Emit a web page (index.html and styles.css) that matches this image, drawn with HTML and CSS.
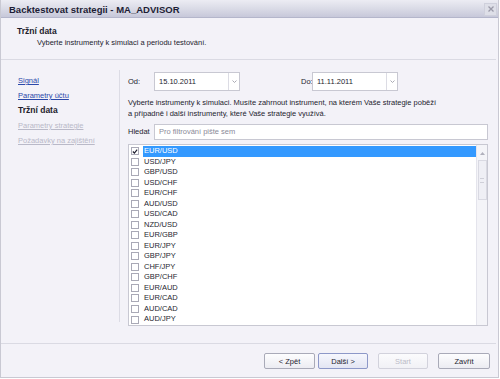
FILE: index.html
```html
<!DOCTYPE html>
<html lang="cs">
<head>
<meta charset="utf-8">
<title>Backtestovat strategii</title>
<link rel="stylesheet" href="styles.css">
</head>
<body>
<div class="window">
  <div class="titlebar">
    <span class="title">Backtestovat strategii - MA_ADVISOR</span>
    <span class="close"><svg width="6" height="6" viewBox="0 0 6 6"><path d="M0.5 0.5L5.5 5.5M5.5 0.5L0.5 5.5" stroke="#9a9aa8" stroke-width="1.3"/></svg></span>
  </div>
  <div class="header">
    <div class="h-title">Tržní data</div>
    <div class="h-sub">Vyberte instrumenty k simulaci a periodu testování.</div>
  </div>
  <div class="main">
    <nav class="nav">
      <a class="nav-link">Signál</a>
      <a class="nav-link">Parametry účtu</a>
      <span class="nav-current">Tržní data</span>
      <a class="nav-link disabled">Parametry strategie</a>
      <a class="nav-link disabled">Požadavky na zajištění</a>
    </nav>
    <div class="content">
      <div class="dates">
        <span class="lbl lbl-od">Od:</span>
        <div class="combo combo-od"><span class="combo-val">15.10.2011</span><span class="combo-btn"><svg width="5" height="3" viewBox="0 0 5 3"><path d="M0.5 0.5L2.5 2.5L4.5 0.5" fill="none" stroke="#a0a0ac" stroke-width="0.9"/></svg></span></div>
        <span class="lbl lbl-do">Do:</span>
        <div class="combo combo-do"><span class="combo-val">11.11.2011</span><span class="combo-btn"><svg width="5" height="3" viewBox="0 0 5 3"><path d="M0.5 0.5L2.5 2.5L4.5 0.5" fill="none" stroke="#a0a0ac" stroke-width="0.9"/></svg></span></div>
      </div>
      <p class="info">Vyberte instrumenty k simulaci. Musíte zahrnout instrument, na kterém Vaše strategie poběží<br>a případně i další instrumenty, které Vaše strategie využívá.</p>
      <div class="search">
        <span class="lbl lbl-search">Hledat</span>
        <div class="search-box">Pro filtrování pište sem</div>
      </div>
      <div class="list">
        <div class="rows">
          <div class="row sel"><span class="cb"><svg width="7" height="7" viewBox="0 0 7 7"><path d="M1 3.5L2.8 5.3L6 1.2" fill="none" stroke="#202030" stroke-width="1.4"/></svg></span><span class="txt">EUR/USD</span></div>
          <div class="row"><span class="cb"></span><span class="txt">USD/JPY</span></div>
          <div class="row"><span class="cb"></span><span class="txt">GBP/USD</span></div>
          <div class="row"><span class="cb"></span><span class="txt">USD/CHF</span></div>
          <div class="row"><span class="cb"></span><span class="txt">EUR/CHF</span></div>
          <div class="row"><span class="cb"></span><span class="txt">AUD/USD</span></div>
          <div class="row"><span class="cb"></span><span class="txt">USD/CAD</span></div>
          <div class="row"><span class="cb"></span><span class="txt">NZD/USD</span></div>
          <div class="row"><span class="cb"></span><span class="txt">EUR/GBP</span></div>
          <div class="row"><span class="cb"></span><span class="txt">EUR/JPY</span></div>
          <div class="row"><span class="cb"></span><span class="txt">GBP/JPY</span></div>
          <div class="row"><span class="cb"></span><span class="txt">CHF/JPY</span></div>
          <div class="row"><span class="cb"></span><span class="txt">GBP/CHF</span></div>
          <div class="row"><span class="cb"></span><span class="txt">EUR/AUD</span></div>
          <div class="row"><span class="cb"></span><span class="txt">EUR/CAD</span></div>
          <div class="row"><span class="cb"></span><span class="txt">AUD/CAD</span></div>
          <div class="row"><span class="cb"></span><span class="txt">AUD/JPY</span></div>
        </div>
        <div class="scrollbar">
          <span class="sb-arrow"><svg width="5" height="3" viewBox="0 0 5 3"><path d="M0 3L2.5 0L5 3Z" fill="#b0b0bc"/></svg></span>
          <span class="sb-thumb"><span class="grip"></span></span>
        </div>
      </div>
    </div>
  </div>
  <div class="footer">
    <button class="btn btn-back">&lt; Zpět</button>
    <button class="btn btn-next">Další &gt;</button>
    <button class="btn btn-start" disabled>Start</button>
    <button class="btn btn-close">Zavřít</button>
  </div>
</div>
</body>
</html>
```
FILE: styles.css
```css
html, body {
  margin: 0;
  padding: 0;
  background: #ffffff;
}
body {
  width: 500px;
  height: 379px;
  font-family: "Liberation Sans", Arial, sans-serif;
  font-size: 7.5px;
  color: #23232f;
}
.window {
  box-sizing: border-box;
  width: 499px;
  height: 378px;
  margin-left: 0;
  border: 1px solid #c9c9d3;
  border-top: none;
  background: #f3f2f8;
  display: flex;
  flex-direction: column;
}
.titlebar {
  height: 18px;
  box-sizing: border-box;
  display: flex;
  align-items: center;
  justify-content: space-between;
  padding: 0 1px 0 8px;
  background: linear-gradient(#ececf3 0%, #dcdde8 45%, #c7c8da 100%);
  border-bottom: 1px solid #b4b6cb;
}
.title {
  font-weight: bold;
  font-size: 9.5px;
  color: #1d1d35;
  padding-top: 2px;
}
.close {
  width: 11px;
  height: 11px;
  display: flex;
  align-items: center;
  justify-content: center;
  background: #dedfe8;
  border: 1px solid #cfd0dc;
  margin-top: 1px;
}
.header {
  height: 42px;
  box-sizing: border-box;
  border-bottom: 1px solid #dadae3;
  padding: 7px 0 0 16px;
  margin-right: 2px;
}
.h-title {
  font-weight: bold;
  font-size: 8.5px;
  line-height: 12px;
  color: #1d1d2c;
}
.h-sub {
  line-height: 11px;
  padding-left: 20px;
}
.main {
  height: 283px;
  display: flex;
  align-items: flex-start;
}
.nav {
  width: 119px;
  height: 252px;
  margin-top: 10px;
  box-sizing: border-box;
  border-right: 1px solid #dcdce5;
  padding: 3px 0 0 17px;
  display: flex;
  flex-direction: column;
}
.nav-link, .nav-current {
  line-height: 15px;
  height: 15px;
}
.nav-link {
  color: #2a48aa;
  text-decoration: underline;
}
.nav-link.disabled {
  color: #b9b9c8;
}
.nav-current {
  font-weight: bold;
  font-size: 8.5px;
  color: #1d1d2c;
}
.content {
  flex: 1;
  padding: 12px 10px 0 8px;
  display: flex;
  flex-direction: column;
}
.dates {
  display: flex;
  align-items: center;
  height: 19px;
}
.lbl {
  line-height: 19px;
}
.lbl-od {
  width: 26px;
}
.lbl-do {
  margin-left: 61px;
  width: 11px;
}
.combo {
  height: 19px;
  box-sizing: border-box;
  border: 1px solid #c8c8d2;
  background: #ffffff;
  display: flex;
  align-items: stretch;
}
.combo-od { width: 86px; }
.combo-do { width: 86px; }
.combo-val {
  flex: 1;
  padding-left: 4px;
  line-height: 17px;
}
.combo-btn {
  width: 10px;
  border-left: 1px solid #dcdce4;
  display: flex;
  align-items: center;
  justify-content: center;
}
.info {
  margin: 7px 0 0 0;
  line-height: 10.5px;
}
.search {
  display: flex;
  align-items: center;
  margin-top: 5px;
  height: 16px;
}
.lbl-search {
  width: 26px;
  line-height: 16px;
}
.search-box {
  flex: 1;
  height: 16px;
  box-sizing: border-box;
  border: 1px solid #c8c8d2;
  background: #ffffff;
  color: #8a8a98;
  padding-left: 4px;
  line-height: 14px;
}
.list {
  margin-top: 4px;
  height: 182px;
  box-sizing: border-box;
  border: 1px solid #c8c8d2;
  background: #ffffff;
  display: flex;
}
.rows {
  flex: 1;
  padding-top: 1px;
}
.row {
  height: 10.53px;
  display: flex;
  align-items: center;
}
.cb {
  width: 8px;
  height: 8px;
  box-sizing: border-box;
  border: 1px solid #a9a9b6;
  background: #ffffff;
  margin-left: 2px;
  margin-right: 4px;
  display: flex;
  align-items: center;
  justify-content: center;
  flex: none;
}
.txt {
  flex: 1;
  line-height: 10.5px;
  height: 10.5px;
  padding-left: 1px;
  color: #26262f;
}
.row.sel .txt {
  background: #3399ff;
  color: #ffffff;
}
.scrollbar {
  width: 11px;
  box-sizing: border-box;
  border-left: 1px solid #e4e4ec;
  background: #f4f4f8;
  display: flex;
  flex-direction: column;
  align-items: center;
}
.sb-arrow {
  height: 12px;
  display: flex;
  align-items: center;
  margin-top: 2px;
}
.sb-thumb {
  width: 9px;
  height: 40px;
  box-sizing: border-box;
  border: 1px solid #d9d9e2;
  background: #efeff5;
  display: flex;
  align-items: center;
  justify-content: center;
  margin-top: 1px;
}
.grip {
  width: 4px;
  height: 3px;
  border-top: 1px solid #cfcfd8;
  border-bottom: 1px solid #cfcfd8;
}
.footer {
  flex: 1;
  border-top: 1px solid #dadae3;
  margin-right: 2px;
  display: flex;
  justify-content: flex-end;
  align-items: flex-start;
  padding: 9px 6px 0 0;
}
.btn {
  height: 16px;
  width: 50px;
  box-sizing: border-box;
  font-family: "Liberation Sans", Arial, sans-serif;
  font-size: 7.5px;
  color: #23232f;
  background: linear-gradient(#fdfdfe, #ececf2);
  border: 1px solid #a9aab8;
  border-radius: 2px;
  padding: 0;
  margin: 0;
}
.btn-back { width: 51px; }
.btn-next {
  margin-left: 3px;
  border-color: #8d98c8;
  background: linear-gradient(#f6f7fd, #e3e5f3);
}
.btn-start {
  margin-left: 10px;
  color: #bcbcc8;
  border-color: #d2d2dc;
  background: linear-gradient(#fbfbfd, #f1f1f6);
}
.btn-close {
  margin-left: 10px;
  width: 52px;
}
```
